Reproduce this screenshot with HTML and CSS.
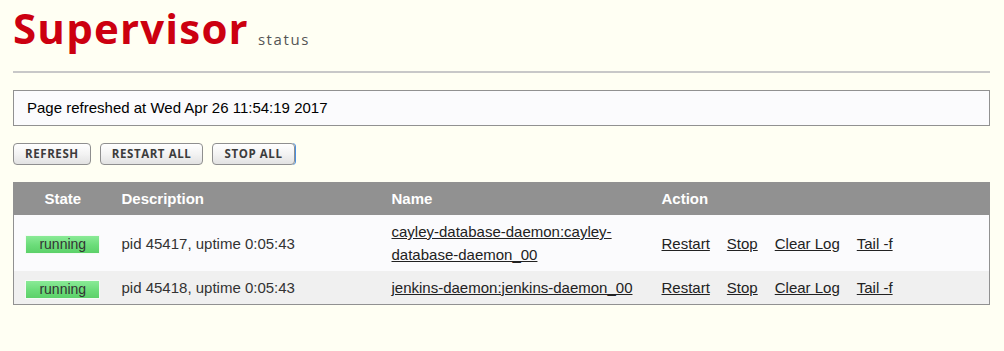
FILE: index.html
```
<!DOCTYPE html>
<html>
<head>
<meta charset="utf-8">
<title>Supervisor Status</title>
<link rel="stylesheet" href="styles.css">
</head>
<body>
<div class="wrapper">
  <div class="header">
    <h1 class="logo"><span class="logo-main">Supervisor</span><span class="logo-sub">status</span></h1>
  </div>
  <div class="status-msg">Page refreshed at Wed Apr 26 11:54:19 2017</div>
  <ul class="buttons">
    <li><a class="button" href="#">Refresh</a></li>
    <li><a class="button" href="#">Restart All</a></li>
    <li><a class="button focused" href="#">Stop All</a></li>
  </ul>
  <table class="procs">
    <colgroup>
      <col class="c-state">
      <col class="c-desc">
      <col class="c-name">
      <col class="c-action">
    </colgroup>
    <thead>
      <tr>
        <th class="state">State</th>
        <th>Description</th>
        <th>Name</th>
        <th>Action</th>
      </tr>
    </thead>
    <tbody>
      <tr class="odd">
        <td class="state"><span class="badge">running</span></td>
        <td>pid 45417, uptime 0:05:43</td>
        <td><a href="#">cayley-database-daemon:cayley-database-daemon_00</a></td>
        <td>
          <ul class="actions">
            <li><a href="#">Restart</a></li>
            <li><a href="#">Stop</a></li>
            <li><a href="#">Clear Log</a></li>
            <li><a href="#">Tail -f</a></li>
          </ul>
        </td>
      </tr>
      <tr class="even">
        <td class="state"><span class="badge">running</span></td>
        <td>pid 45418, uptime 0:05:43</td>
        <td><a href="#">jenkins-daemon:jenkins-daemon_00</a></td>
        <td>
          <ul class="actions">
            <li><a href="#">Restart</a></li>
            <li><a href="#">Stop</a></li>
            <li><a href="#">Clear Log</a></li>
            <li><a href="#">Tail -f</a></li>
          </ul>
        </td>
      </tr>
    </tbody>
  </table>
</div>
</body>
</html>
```
FILE: styles.css
```
html, body {
  margin: 0;
  padding: 0;
}
body {
  background: #fffff3;
  font-family: "Liberation Sans", Arial, sans-serif;
  font-size: 15px;
  color: #333;
}
.wrapper {
  padding: 0 14px 0 13px;
}
.header {
  padding-top: 8px;
  padding-bottom: 15px;
  border-bottom: 2px solid #c8c8c8;
}
.logo {
  margin: 0;
  display: flex;
  align-items: baseline;
  line-height: 48px;
  height: 48px;
}
.logo-main {
  font-family: "Open Sans", sans-serif;
  font-weight: 700;
  font-size: 42px;
  line-height: 40px;
  letter-spacing: 1.2px;
  color: #cc0010;
}
.logo-sub {
  font-family: "Open Sans", sans-serif;
  font-weight: 400;
  font-size: 15px;
  letter-spacing: 1.6px;
  color: #555;
  margin-left: 9px;
  position: relative;
  top: 1px;
}
.status-msg {
  margin-top: 17px;
  border: 1px solid #919191;
  background: #fbfbfd;
  color: #000;
  padding: 6px 13px;
  line-height: 22px;
}
.buttons {
  list-style: none;
  margin: 17px 0 0 0;
  padding: 0;
  display: flex;
  gap: 9px;
}
.button {
  display: block;
  height: 20px;
  line-height: 20px;
  padding: 0 11px;
  border: 1px solid #8f8f8f;
  border-radius: 4px;
  background: linear-gradient(#ffffff, #f3f3f3 50%, #e2e2e2);
  font-family: "Open Sans", sans-serif;
  font-weight: 700;
  font-size: 11.5px;
  letter-spacing: 0.6px;
  text-transform: uppercase;
  color: #3c3c3c;
  text-decoration: none;
}
.button.focused {
  box-shadow: 1px 0 0 #4a90e2;
}
.procs {
  margin-top: 17px;
  width: 100%;
  border-collapse: collapse;
  border: 1px solid #919191;
  table-layout: fixed;
}
.c-state { width: 98px; }
.c-desc { width: 270px; }
.c-name { width: 270px; }
.procs th {
  background: #919191;
  color: #fff;
  font-weight: 700;
  text-align: left;
  padding: 5px 10px;
  line-height: 22px;
}
.procs td {
  padding: 5px 10px;
  line-height: 23px;
  vertical-align: middle;
}
.procs th.state,
.procs td.state {
  text-align: center;
  padding-left: 0;
  padding-right: 0;
}
.odd td { background: #fbfbfd; }
.even td { background: #f0f0f0; }
.badge {
  display: inline-block;
  width: 73px;
  height: 17px;
  line-height: 17px;
  font-size: 14px;
  color: #333;
  border: 1px solid #f4fbf4;
  background: linear-gradient(#8aea97, #6bdc79 55%, #5cd169);
  vertical-align: middle;
}
.procs a {
  color: #222;
  text-decoration: underline;
}
.actions {
  list-style: none;
  margin: 0;
  padding: 0;
  display: flex;
  gap: 17px;
}
```
